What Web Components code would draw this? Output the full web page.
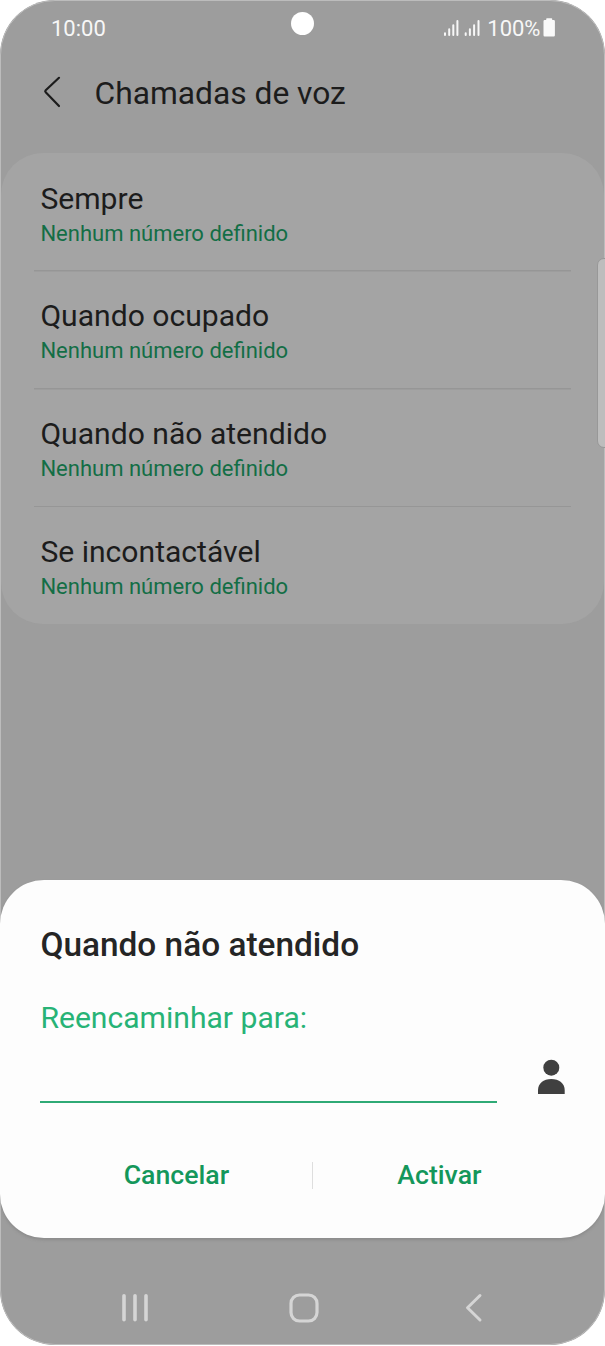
<!DOCTYPE html>
<html lang="pt">
<head>
<meta charset="utf-8">
<title>Chamadas de voz</title>
<style>
html,body{margin:0;background:#fff}
body{font-family:Roboto,"Liberation Sans",sans-serif}
</style>
</head>
<body>
<phone-screen>
  <status-bar></status-bar>
  <app-header>Chamadas de voz</app-header>
  <settings-card>
    <settings-row label="Sempre">Nenhum número definido</settings-row>
    <settings-row label="Quando ocupado">Nenhum número definido</settings-row>
    <settings-row label="Quando não atendido">Nenhum número definido</settings-row>
    <settings-row label="Se incontactável">Nenhum número definido</settings-row>
  </settings-card>
  <bottom-sheet>
    <span slot="title">Quando não atendido</span>
    <number-field>Reencaminhar para:</number-field>
    <sheet-button slot="actions">Cancelar</sheet-button>
    <sheet-button slot="actions">Activar</sheet-button>
  </bottom-sheet>
  <nav-bar></nav-bar>
</phone-screen>
<script>
const define = (name, html) => customElements.define(name, class extends HTMLElement {
  constructor() {
    super();
    this.attachShadow({mode: 'open'}).innerHTML = html;
  }
  connectedCallback() {
    const label = this.shadowRoot.querySelector('.label');
    if (label) label.textContent = this.getAttribute('label');
  }
});

define('phone-screen', `
<style>
:host{display:flex;flex-direction:column;position:relative;box-sizing:border-box;width:605px;height:1345px;border-radius:55px;overflow:hidden;background:#9d9d9d}
::slotted(*){flex:none}
.edge{position:absolute;inset:0;border:1px solid #bcbcbc;border-radius:55px;pointer-events:none}
.handle{position:absolute;right:-8px;top:258px;width:14px;height:188px;border:1px solid #989898;border-radius:7px;background:#bdbdbd}
</style>
<div class="edge"></div>
<slot></slot>
<div class="handle"></div>`);

define('status-bar', `
<style>
:host{display:grid;grid-template-columns:1fr auto 1fr;height:57px;padding:0 48.5px 0 51px;color:#f7f7f7;font-size:22px;line-height:58px}
.camera{width:23px;height:23px;border-radius:50%;background:#fff;margin:12px 2px 0 0}
.right{display:flex;justify-content:flex-end}
svg{display:block}
.signal{margin-right:7px}
</style>
<span>10:00</span>
<div class="camera"></div>
<div class="right">
  <svg class="signal" width="37" height="57" viewBox="443 0 37 57" fill="none" stroke="#f7f7f7" stroke-width="2" stroke-linecap="round"><path d="M445 33.3v1.7M449.2 29.3v5.7M453.3 25.2v9.8M457.4 21v14M465.7 33.3v1.7M469.9 29.3v5.7M474.1 25.2v9.8M478.5 21v14"/></svg>
  <span>100%</span>
  <svg width="16" height="57" viewBox="540.8 0 16 57" fill="#fafafa"><path d="M546 20v-1q0-.7.7-.7h4.6q.7 0 .7.7v1h1.5q1.2 0 1.2 1.2v14q0 1.2-1.2 1.2h-9q-1.2 0-1.2-1.2v-14q0-1.2 1.2-1.2z"/></svg>
</div>`);

define('app-header', `
<style>
:host{display:flex;align-items:center;height:72px;margin-bottom:24px;padding-left:43px;color:#1c1c1c;font-size:31.75px;line-height:38px}
svg{margin-right:32.5px;margin-top:-2px}
span{padding-top:2px}
</style>
<svg width="19" height="34" viewBox="0 0 19 34" fill="none" stroke="currentColor" stroke-width="2.2" stroke-linecap="round" stroke-linejoin="round"><path d="M16 2.8 2.7 15.2Q1.7 16.2 2.7 17.2L16 31"/></svg>
<span><slot></slot></span>`);

define('settings-card', `
<style>
:host{display:block;box-sizing:border-box;height:471px;margin:0 1px;padding-top:1px;border-radius:42px;background:#a4a4a4}
::slotted(:not(:last-child)){--line:#969696}
</style>
<slot></slot>`);

define('settings-row', `
<style>
:host{display:flex;flex-direction:column;box-sizing:border-box;height:117.8px;margin:0 33px;padding:24.7px 0 0 6.4px;background:linear-gradient(var(--line,transparent),var(--line,transparent)) bottom/100% 1.5px no-repeat}
.label{font-size:30.1px;line-height:40px;color:#1c1c1c}
.value{margin-top:1px;font-size:22px;line-height:28px;color:#136e46}
</style>
<span class="label"></span>
<span class="value"><slot></slot></span>`);

define('bottom-sheet', `
<style>
:host{display:flex;flex-direction:column;box-sizing:border-box;position:relative;height:358.5px;margin-top:255.5px;padding:44.5px 40px 0 40.4px;border-radius:44px;background:#fdfdfd;box-shadow:0 2px 3px #7777}
.title{font-size:33.4px;line-height:42px;font-weight:500;color:#252525}
.actions{display:grid;grid-template-columns:272px 1px 252px;align-items:center;margin-top:54px}
.rule{grid-column:2;grid-row:1;height:27px;background:#dedede;width:1px}
</style>
<div class="title"><slot name="title"></slot></div>
<slot></slot>
<div class="actions"><slot name="actions"></slot><i class="rule"></i></div>`);

define('number-field', `
<style>
:host{display:block;margin-top:32px}
label{display:block;font-size:30.1px;line-height:40px;color:#27b376}
.row{display:flex;justify-content:space-between;height:65px}
.input{width:457px;height:63px;border-bottom:2px solid #2faa76}
svg{display:block;margin-top:20px}
</style>
<label><slot></slot></label>
<div class="row"><div class="input"></div>
<svg width="27" height="36" viewBox="0 0 27 36" fill="#404040"><circle cx="13.3" cy="9.7" r="8"/><path d="M0 36v-4C0 25.5 5.5 21 13.3 21S26.7 25.5 26.7 32v4z"/></svg></div>`);

define('sheet-button', `
<style>
:host{display:block;text-align:center;font-size:26.7px;line-height:36px;font-weight:500;color:#14975b;grid-row:1}
:host(:last-child){grid-column:3}
</style>
<slot></slot>`);

define('nav-bar', `
<style>
:host{display:flex;justify-content:space-between;align-items:center;height:107px;padding:33px 122px 0 121px;box-sizing:border-box}
svg{display:block}
.home{margin-right:6px}
</style>
<svg width="28" height="32" viewBox="0 0 28 32" stroke="#d5d5d5" stroke-width="3.6" stroke-linecap="round"><path d="M3 3.8v24M14 3.8v24M25 3.8v24"/></svg>
<svg class="home" width="32" height="32" viewBox="0 0 32 32" fill="none" stroke="#d5d5d5" stroke-width="3.2"><rect x="3" y="3" width="26" height="26" rx="8.5"/></svg>
<svg width="18" height="32" viewBox="0 0 18 32" fill="none" stroke="#d5d5d5" stroke-width="3" stroke-linecap="round" stroke-linejoin="round"><path d="M15 3.5 2.5 15.8 15 28"/></svg>`);
</script>
</body>
</html>
